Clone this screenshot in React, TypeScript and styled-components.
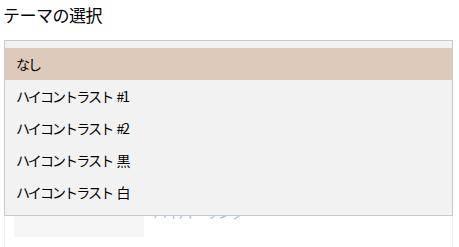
import React from 'react';
import styled, { createGlobalStyle } from 'styled-components';

const GlobalStyle = createGlobalStyle`
  html, body {
    margin: 0;
    background: #ffffff;
    font-family: "Noto Sans CJK JP", "Noto Sans", sans-serif;
    color: #000000;
    overflow: hidden;
  }
`;

const Page = styled.div`
  width: 459px;
  height: 247px;
  display: flex;
  flex-direction: column;
  gap: 10px;
`;

const Title = styled.h1`
  margin: 0;
  padding-left: 3px;
  height: 30px;
  font-size: 17px;
  font-weight: 400;
  line-height: 30px;
  letter-spacing: -0.5px;
`;

const Area = styled.div`
  position: relative;
  margin: 0 6px 0 4px;
  flex: 1;
`;

const Preview = styled.div`
  height: 100%;
  box-sizing: border-box;
  border-left: 1px solid #ebebeb;
  border-right: 1px solid #ebebeb;
  display: flex;
  align-items: flex-end;
  gap: 9px;
  padding: 0 0 10px 9px;
`;

const Swatch = styled.div`
  width: 130px;
  height: 60px;
  background: #f5f5f5;
`;

const LinkText = styled.span`
  align-self: flex-end;
  margin-bottom: 16px;
  font-size: 14px;
  line-height: 18px;
  letter-spacing: -1px;
  color: #9cc3ea;
`;

const Menu = styled.ul`
  position: absolute;
  top: 0;
  left: 0;
  right: 0;
  margin: 0;
  padding: 7px 0;
  list-style: none;
  background: #f2f2f2;
  border: 1px solid #c9c9c9;
`;

const Item = styled.li<{ $selected?: boolean }>`
  height: 32px;
  display: flex;
  align-items: center;
  padding-left: 11px;
  font-size: 14px;
  letter-spacing: -1.9px;
  word-spacing: 3px;
  background: ${(p) => (p.$selected ? '#ddcaba' : 'transparent')};
`;

const options = [
  'なし',
  'ハイコントラスト #1',
  'ハイコントラスト #2',
  'ハイコントラスト 黒',
  'ハイコントラスト 白',
];

export default function App() {
  return (
    <>
      <GlobalStyle />
      <Page>
        <Title>テーマの選択</Title>
        <Area>
          <Preview>
            <Swatch />
            <LinkText>ハイパーリンク</LinkText>
          </Preview>
          <Menu>
            {options.map((o, i) => (
              <Item key={o} $selected={i === 0}>
                {o}
              </Item>
            ))}
          </Menu>
        </Area>
      </Page>
    </>
  );
}
